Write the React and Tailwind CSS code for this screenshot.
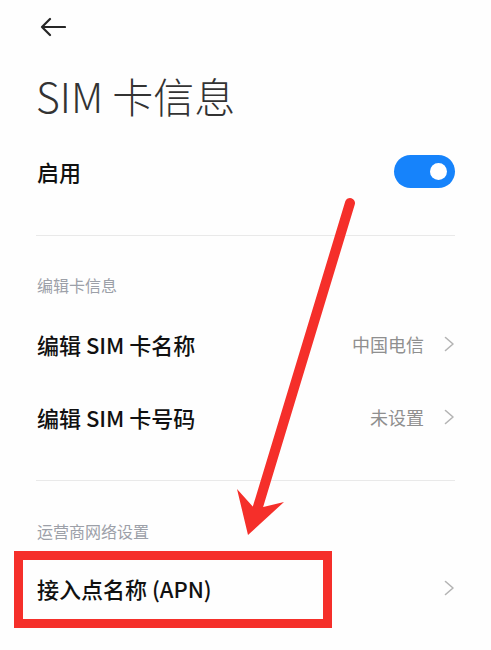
import React from 'react';

const font = { fontFamily: '"Noto Sans CJK SC", "Noto Sans", sans-serif' };

const Chevron = () => (
  <svg width="11" height="16" viewBox="0 0 11 16" fill="none">
    <path d="M1.5 1.5 L9 8 L1.5 14.5" stroke="#b4b4b4" strokeWidth="1.6" strokeLinecap="round" strokeLinejoin="round" />
  </svg>
);

const Row = ({ label, value, showChevron = true }) => (
  <div className="h-[73px] flex items-center justify-between">
    <span className="text-[22px] leading-[28px] font-medium text-[#111]">{label}</span>
    <div className="flex items-center gap-[20px]">
      {value && <span className="text-[18px] leading-[24px] text-[#8f8f8f]">{value}</span>}
      {showChevron && <Chevron />}
    </div>
  </div>
);

const SectionLabel = ({ children, className }) => (
  <div className={`flex items-end ${className}`}>
    <span className="text-[16px] leading-[18px] text-[#9ca0a8]">{children}</span>
  </div>
);

const App = () => {
  return (
    <div className="relative w-[491px] h-[650px] overflow-hidden bg-[#fefefe]" style={font}>
      {/* header */}
      <div className="h-[54px] flex items-center pl-[40px]">
        <svg width="26" height="20" viewBox="0 0 26 20" fill="none">
          <path d="M25 10 H2 M10 2 L2 10 L10 18" stroke="#262626" strokeWidth="2.2" strokeLinecap="round" strokeLinejoin="round" />
        </svg>
      </div>

      <div className="pl-[36px] pr-[36px]">
        <div className="h-[82px] flex items-center">
          <h1 className="text-[41px] leading-[48px] font-light text-[#333]">SIM 卡信息</h1>
        </div>

        <div className="h-[70px] flex items-center justify-between pl-[1px]">
          <span className="text-[22px] leading-[28px] font-medium text-[#111]">启用</span>
          <div className="w-[61px] h-[33px] rounded-full bg-[#1683fb] flex items-center justify-end pr-[8px]">
            <div className="w-[17px] h-[17px] rounded-full bg-white" />
          </div>
        </div>

        <div className="h-[29px]" />
        <div className="h-px bg-[#e9e9e9]" />

        <div className="pl-[1px]">
          <SectionLabel className="h-[71px] pb-[13px]">编辑卡信息</SectionLabel>
          <Row label="编辑 SIM 卡名称" value="中国电信" />
          <Row label="编辑 SIM 卡号码" value="未设置" />
        </div>

        <div className="h-[27px]" />
        <div className="h-px bg-[#e9e9e9]" />

        <div className="pl-[1px]">
          <SectionLabel className="h-[70px] pb-[11px]">运营商网络设置</SectionLabel>
          <Row label="接入点名称 (APN)" />
        </div>
      </div>

      {/* annotation: red box */}
      <div className="absolute left-[14px] top-[551px] w-[318px] h-[77px] border-[9px] border-[#f52f2a] pointer-events-none" />

      {/* annotation: red arrow */}
      <svg className="absolute inset-0 pointer-events-none" width="491" height="650" viewBox="0 0 491 650">
        <line x1="350" y1="203" x2="257" y2="510" stroke="#f52f2a" strokeWidth="10" strokeLinecap="round" />
        <polygon points="248,535 237,489 255,509 284,502" fill="#f52f2a" />
      </svg>
    </div>
  );
};

export default App;
